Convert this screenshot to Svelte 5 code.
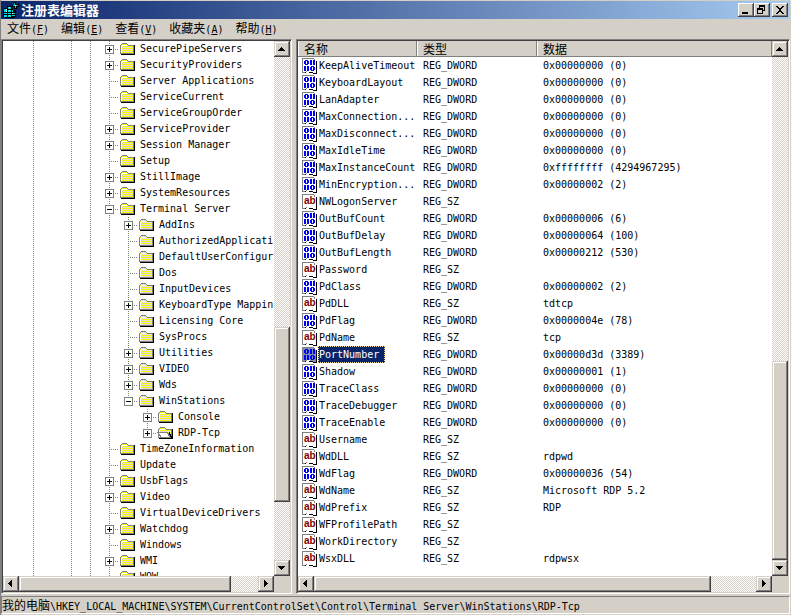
<script lang="ts">
  type TreeNode = { name: string; depth: number; box?: '+' | '-'; open?: boolean; last?: boolean };
  type Value = { name: string; type: 'REG_DWORD' | 'REG_SZ'; data: string };

  const menus = [
    { label: '文件', key: 'F' },
    { label: '编辑', key: 'E' },
    { label: '查看', key: 'V' },
    { label: '收藏夹', key: 'A' },
    { label: '帮助', key: 'H' }
  ];

  const nodes: TreeNode[] = [
    { name: 'SecurePipeServers', depth: 0, box: '+' },
    { name: 'SecurityProviders', depth: 0, box: '+' },
    { name: 'Server Applications', depth: 0 },
    { name: 'ServiceCurrent', depth: 0 },
    { name: 'ServiceGroupOrder', depth: 0 },
    { name: 'ServiceProvider', depth: 0, box: '+' },
    { name: 'Session Manager', depth: 0, box: '+' },
    { name: 'Setup', depth: 0 },
    { name: 'StillImage', depth: 0, box: '+' },
    { name: 'SystemResources', depth: 0, box: '+' },
    { name: 'Terminal Server', depth: 0, box: '-' },
    { name: 'AddIns', depth: 1, box: '+' },
    { name: 'AuthorizedApplicati', depth: 1 },
    { name: 'DefaultUserConfigur', depth: 1 },
    { name: 'Dos', depth: 1 },
    { name: 'InputDevices', depth: 1 },
    { name: 'KeyboardType Mappin', depth: 1, box: '+' },
    { name: 'Licensing Core', depth: 1 },
    { name: 'SysProcs', depth: 1 },
    { name: 'Utilities', depth: 1, box: '+' },
    { name: 'VIDEO', depth: 1, box: '+' },
    { name: 'Wds', depth: 1, box: '+' },
    { name: 'WinStations', depth: 1, box: '-', last: true },
    { name: 'Console', depth: 2, box: '+' },
    { name: 'RDP-Tcp', depth: 2, box: '+', open: true, last: true },
    { name: 'TimeZoneInformation', depth: 0 },
    { name: 'Update', depth: 0 },
    { name: 'UsbFlags', depth: 0, box: '+' },
    { name: 'Video', depth: 0, box: '+' },
    { name: 'VirtualDeviceDrivers', depth: 0 },
    { name: 'Watchdog', depth: 0, box: '+' },
    { name: 'Windows', depth: 0 },
    { name: 'WMI', depth: 0, box: '+' },
    { name: 'WOW', depth: 0 }
  ];

  // which ancestor columns still have a connecting line
  const ancestors = [false, true, false, true, true];
  const guides = (depth: number) =>
    depth === 0 ? ancestors : depth === 1 ? [...ancestors, true] : [...ancestors, true, false];

  const dword = (name: string, data: string): Value => ({ name, type: 'REG_DWORD', data });
  const sz = (name: string, data = ''): Value => ({ name, type: 'REG_SZ', data });

  const values: Value[] = [
    dword('KeepAliveTimeout', '0x00000000 (0)'),
    dword('KeyboardLayout', '0x00000000 (0)'),
    dword('LanAdapter', '0x00000000 (0)'),
    dword('MaxConnection...', '0x00000000 (0)'),
    dword('MaxDisconnect...', '0x00000000 (0)'),
    dword('MaxIdleTime', '0x00000000 (0)'),
    dword('MaxInstanceCount', '0xffffffff (4294967295)'),
    dword('MinEncryption...', '0x00000002 (2)'),
    sz('NWLogonServer'),
    dword('OutBufCount', '0x00000006 (6)'),
    dword('OutBufDelay', '0x00000064 (100)'),
    dword('OutBufLength', '0x00000212 (530)'),
    sz('Password'),
    dword('PdClass', '0x00000002 (2)'),
    sz('PdDLL', 'tdtcp'),
    dword('PdFlag', '0x0000004e (78)'),
    sz('PdName', 'tcp'),
    dword('PortNumber', '0x00000d3d (3389)'),
    dword('Shadow', '0x00000001 (1)'),
    dword('TraceClass', '0x00000000 (0)'),
    dword('TraceDebugger', '0x00000000 (0)'),
    dword('TraceEnable', '0x00000000 (0)'),
    sz('Username'),
    sz('WdDLL', 'rdpwd'),
    dword('WdFlag', '0x00000036 (54)'),
    sz('WdName', 'Microsoft RDP 5.2'),
    sz('WdPrefix', 'RDP'),
    sz('WFProfilePath'),
    sz('WorkDirectory'),
    sz('WsxDLL', 'rdpwsx')
  ];

  let selected = $state('PortNumber');
</script>

{#snippet folder(open: boolean)}
  <svg class="folder" width="18" height="16" viewBox="0 0 18 16" shape-rendering="crispEdges" aria-hidden="true">
    <defs>
      <pattern id="dither" width="2" height="2" patternUnits="userSpaceOnUse">
        <rect width="2" height="2" fill="#d8d8d8" />
        <rect width="1" height="1" fill="#ffff00" />
        <rect x="1" y="1" width="1" height="1" fill="#ffff00" />
      </pattern>
    </defs>
    <path d="M2 14h14V4h-1v9H2z" fill="#000" />
    <path d="M1 13V4h1V3h1V2h5v1h1v1h6v9z" fill="#808080" />
    <path d="M2 12V4h1V3h5v1h1v1h5v7z" fill="url(#dither)" />
    <path d="M2 12V5h1V4h5v1H3v7z" fill="#fff" />
    {#if open}
      <path d="M0 7h11v1h1v2h1v2h1v1H3v-2H2V9H1V8H0z" fill="#808080" />
      <path d="M2 8h8v1h1v2h1v1H4v-2H3V9H2z" fill="#fff" />
      <path d="M12 7h1v2h1v2h1v3h-1v-2h-1v-2h-1z" fill="#000" />
    {/if}
  </svg>
{/snippet}

{#snippet valueIcon(type: string)}
  <svg class="value-icon" width="16" height="16" viewBox="0 0 16 16" shape-rendering="crispEdges" aria-hidden="true">
    <path d="M12 3h3v13h-4v-1H7v-1H4v1H1v-1h13V4h-2z" fill="#000" />
    <path d="M0 0h12v1h1v2h1v12h-3v-1H8v-1H5v1H3v1H0z" fill="#808080" />
    <path class="paper" d="M1 1h11v2h2v12h-3v-1H8v-1H4v1H1z" fill="#fff" />
    {#if type === 'REG_SZ'}
      <text x="2" y="10">ab</text>
    {:else}
      <g fill="#0000ff">
        <path d="M3 2h3v1h1v3H6v1H3V6H2V3h1zM4 3v3h1V3z" fill-rule="evenodd" />
        <rect x="8" y="2" width="2" height="5" />
        <rect x="11" y="2" width="2" height="5" />
        <rect x="2" y="8" width="2" height="5" />
        <rect x="5" y="8" width="2" height="5" />
        <path d="M9 8h3v1h1v3h-1v1H9v-1H8V9h1zM10 9v3h1V9z" fill-rule="evenodd" />
      </g>
    {/if}
  </svg>
{/snippet}

{#snippet arrow(dir: string)}
  <button class="scroll-button" aria-label={dir}>
    <svg width="8" height="8" viewBox="0 0 8 8" shape-rendering="crispEdges" aria-hidden="true">
      {#if dir === 'up'}
        <path d="M3 2h1v1h1v1h1v1h1v1H0V5h1V4h1V3h1z" />
      {:else if dir === 'down'}
        <path d="M0 2h7v1H6v1H5v1H4v1H3V5H2V4H1V3H0z" />
      {:else if dir === 'left'}
        <path d="M5 0v7H4V6H3V5H2V4H1V3h1V2h1V1h1V0z" />
      {:else}
        <path d="M2 0h1v1h1v1h1v1h1v1H5v1H4v1H3v1H2z" />
      {/if}
    </svg>
  </button>
{/snippet}

{#snippet scrollbar(vertical: boolean, before: number, size: number, after: number)}
  <div class="scrollbar" class:vertical>
    {@render arrow(vertical ? 'up' : 'left')}
    <div class="track">
      <div style="flex-grow: {before}"></div>
      <div class="thumb" style="flex-grow: {size}"></div>
      <div style="flex-grow: {after}"></div>
    </div>
    {@render arrow(vertical ? 'down' : 'right')}
  </div>
{/snippet}

<div class="window">
  <header class="title-bar">
    <svg width="16" height="16" viewBox="0 0 16 16" shape-rendering="crispEdges" aria-hidden="true">
      <path d="M1 6h3V4h5v2h1v2h3v7h-2v1H2v-1H0V7h1z" fill="#000" />
      <path d="M1 7h3v3H1zM5 5h3v2H5zM5 8h3v2H5zM9 8h1v2H9zM1 11h3v1H1zM5 11h3v1H5zM9 11h3v1H9zM1 13h3v2H1zM5 13h3v2H5zM9 13h3v1H9z" fill="#00d8d8" />
      <path d="M3 7h1v1H3zM6 5h1v1H6zM3 9h1v1H3zM6 8h1v1H6zM9 11h1v1H9zM6 13h1v1H6z" fill="#fff" />
      <path d="M9 3h2V0h2v2h3v3h-2v2h-3V5H9z" fill="#000" />
      <path d="M11 1h1v2h3v1h-2v2h-1V4h-2V3h1z" fill="#00c0c0" />
      <path d="M12 3h1v1h-1z" fill="#fff" />
    </svg>
    <h1>注册表编辑器</h1>
    <div class="window-buttons">
      <button aria-label="最小化">
        <svg width="12" height="10" viewBox="0 0 12 10" shape-rendering="crispEdges"><path d="M2 7h6v2H2z" /></svg>
      </button>
      <button aria-label="还原">
        <svg width="12" height="10" viewBox="0 0 12 10" shape-rendering="crispEdges">
          <path d="M3 0h6v6H7V5h1V2H4v1H3zM1 3h6v6H1zM2 5v3h4V5z" fill-rule="evenodd" />
        </svg>
      </button>
      <button class="close" aria-label="关闭">
        <svg width="12" height="10" viewBox="0 0 12 10" shape-rendering="crispEdges">
          <path d="M2 1h2v1h1v1h2V2h1V1h2v1H9v1H8v1H7v2h1v1h1v1h1v1H8V8H7V7H5v1H4v1H2V8h1V7h1V6h1V4H4V3H3V2H2z" />
        </svg>
      </button>
    </div>
  </header>

  <nav class="menu-bar">
    {#each menus as menu}
      <button>{menu.label}<span class="latin">(<u>{menu.key}</u>)</span></button>
    {/each}
  </nav>

  <main>
    <section class="pane keys">
      <ul class="tree">
        {#each nodes as node}
          <li>
            {#each guides(node.depth) as line}
              <span class="cell" class:line></span>
            {/each}
            <span class="cell branch" class:last={node.last}>
              {#if node.box}
                <button class="expander" aria-label={node.name}>
                  <svg width="7" height="7" viewBox="0 0 7 7" shape-rendering="crispEdges">
                    <path d={node.box === '+' ? 'M1 3h2V1h1v2h2v1H4v2H3V4H1z' : 'M1 3h5v1H1z'} />
                  </svg>
                </button>
              {/if}
            </span>
            {@render folder(node.open ?? false)}
            <span class="key-name">{node.name}</span>
          </li>
        {/each}
      </ul>
      {@render scrollbar(true, 270, 175, 58)}
      {@render scrollbar(false, 0, 212, 27)}
    </section>

    <section class="pane values">
      <div class="list">
        <table>
          <thead>
            <tr>
              <th class="name">名称</th>
              <th class="type">类型</th>
              <th>数据</th>
            </tr>
          </thead>
          <tbody>
            {#each values as value}
              <tr class:selected={value.name === selected} onclick={() => (selected = value.name)}>
                <td>
                  <div class="value-name">
                    {@render valueIcon(value.type)}
                    <span class="label">{value.name}</span>
                  </div>
                </td>
                <td>{value.type}</td>
                <td>{value.data}</td>
              </tr>
            {/each}
          </tbody>
        </table>
      </div>
      {@render scrollbar(true, 304, 199, 0)}
      {@render scrollbar(false, 0, 397, 45)}
    </section>
  </main>

  <footer>
    我的电脑<span class="latin">\HKEY_LOCAL_MACHINE\SYSTEM\CurrentControlSet\Control\Terminal Server\WinStations\RDP-Tcp</span>
  </footer>
</div>

<style>
  :global(body) {
    overflow: hidden;
  }

  .window {
    box-sizing: border-box;
    display: flex;
    flex-direction: column;
    height: 100vh;
    padding: 1px;
    background: #d4d0c8;
    color: #000;
    font: 12px/16px 'Noto Sans CJK SC', sans-serif;
    box-shadow: inset 1px 0 #808080;
    cursor: default;
  }

  button {
    box-sizing: border-box;
    padding: 0;
    border: 0;
    background: #d4d0c8;
    color: inherit;
    font: inherit;
  }

  svg {
    display: block;
    flex: none;
  }

  .latin,
  .tree,
  td {
    font-family: 'DejaVu Sans Mono', monospace;
    font-size: 10px;
  }

  .title-bar {
    display: flex;
    flex: none;
    align-items: center;
    gap: 2px;
    height: 18px;
    padding: 0 2px;
    background: linear-gradient(to right, #0a246a, #a6caf0);
  }

  h1 {
    flex: 1;
    margin: 0;
    color: #fff;
    font-size: 13px;
    font-weight: bold;
    line-height: 16px;
  }

  .window-buttons {
    display: flex;
  }

  .window-buttons button {
    width: 16px;
    height: 14px;
    padding: 2px;
    box-shadow: inset -1px -1px #404040, inset 1px 1px #fff, inset -2px -2px #808080;
  }

  .window-buttons .close {
    margin-left: 2px;
  }

  .menu-bar {
    display: flex;
    flex: none;
    align-items: flex-start;
    height: 20px;
  }

  .menu-bar button {
    padding: 0 6px;
    line-height: 18px;
    white-space: nowrap;
  }

  main {
    display: flex;
    flex: 1;
    gap: 4px;
    min-height: 0;
  }

  .pane {
    box-sizing: border-box;
    display: grid;
    grid-template-columns: minmax(0, 1fr) 16px;
    grid-template-rows: minmax(0, 1fr) 16px;
    border: 1px solid;
    border-color: #808080 #fff #fff #808080;
    padding: 1px;
    box-shadow: inset 1px 1px #404040;
  }

  .keys {
    flex: 0 0 291px;
  }

  .values {
    flex: 1;
    min-width: 0;
  }

  .tree {
    margin: 0;
    padding: 0 0 0 2px;
    overflow: hidden;
    background: #fff;
    list-style: none;
  }

  .tree li {
    display: flex;
    height: 16px;
    white-space: nowrap;
  }

  .cell {
    display: flex;
    flex: none;
    align-items: center;
    justify-content: center;
    width: 19px;
    height: 16px;
    background-repeat: no-repeat;
  }

  .line {
    background-image: repeating-linear-gradient(to bottom, #808080 0 1px, transparent 1px 2px);
    background-position: 9px 0;
    background-size: 1px 16px;
  }

  .branch {
    background-image: repeating-linear-gradient(to bottom, #808080 0 1px, transparent 1px 2px),
      repeating-linear-gradient(to right, #808080 0 1px, transparent 1px 2px);
    background-position: 9px 0, 9px 8px;
    background-size: 1px 16px, 10px 1px;
  }

  .branch.last {
    background-size: 1px 8px, 10px 1px;
  }

  .expander {
    width: 9px;
    height: 9px;
    border: 1px solid #808080;
    background: #fff;
  }

  .key-name {
    padding-left: 3px;
  }

  .list {
    overflow: hidden;
    background: #fff;
  }

  table {
    width: 100%;
    border-collapse: separate;
    border-spacing: 0;
    table-layout: fixed;
  }

  th {
    height: 16px;
    padding: 0 6px;
    background: #d4d0c8;
    box-shadow: inset -1px -1px #808080, inset 1px 0 #fff;
    font-weight: normal;
    line-height: 16px;
    text-align: left;
  }

  .name {
    width: 107px;
  }

  .type {
    width: 108px;
  }

  td {
    height: 17px;
    padding: 0 0 0 6px;
    line-height: 17px;
    white-space: nowrap;
  }

  td:first-child {
    padding-left: 4px;
  }

  .value-name {
    display: flex;
    align-items: center;
  }

  .value-icon text {
    fill: #800000;
    font: bold 10px 'Liberation Sans', sans-serif;
  }

  .label {
    padding: 0 6px 0 1px;
  }

  .selected .label {
    background: #0a246a;
    color: #fff;
    outline: 1px dotted #f5db95;
    outline-offset: -1px;
  }

  .selected .paper {
    fill: #8491b4;
  }

  .scrollbar {
    display: flex;
    min-width: 0;
    min-height: 0;
  }

  .scrollbar.vertical {
    flex-direction: column;
  }

  .track {
    display: flex;
    flex: 1;
    background: repeating-conic-gradient(#fff 0 25%, #d4d0c8 0 50%) 0 0 / 2px 2px;
  }

  .vertical .track {
    flex-direction: column;
  }

  .scroll-button {
    display: flex;
    flex: none;
    align-items: center;
    justify-content: center;
    width: 16px;
    height: 16px;
  }

  .scroll-button,
  .thumb {
    background: #d4d0c8;
    box-shadow: inset -1px -1px #404040, inset 1px 1px #d4d0c8, inset -2px -2px #808080, inset 2px 2px #fff;
  }

  footer {
    flex: none;
    box-sizing: border-box;
    height: 18px;
    margin-top: 2px;
    border: 1px solid;
    border-color: #808080 #fff #fff #808080;
    overflow: hidden;
    white-space: nowrap;
  }
</style>
